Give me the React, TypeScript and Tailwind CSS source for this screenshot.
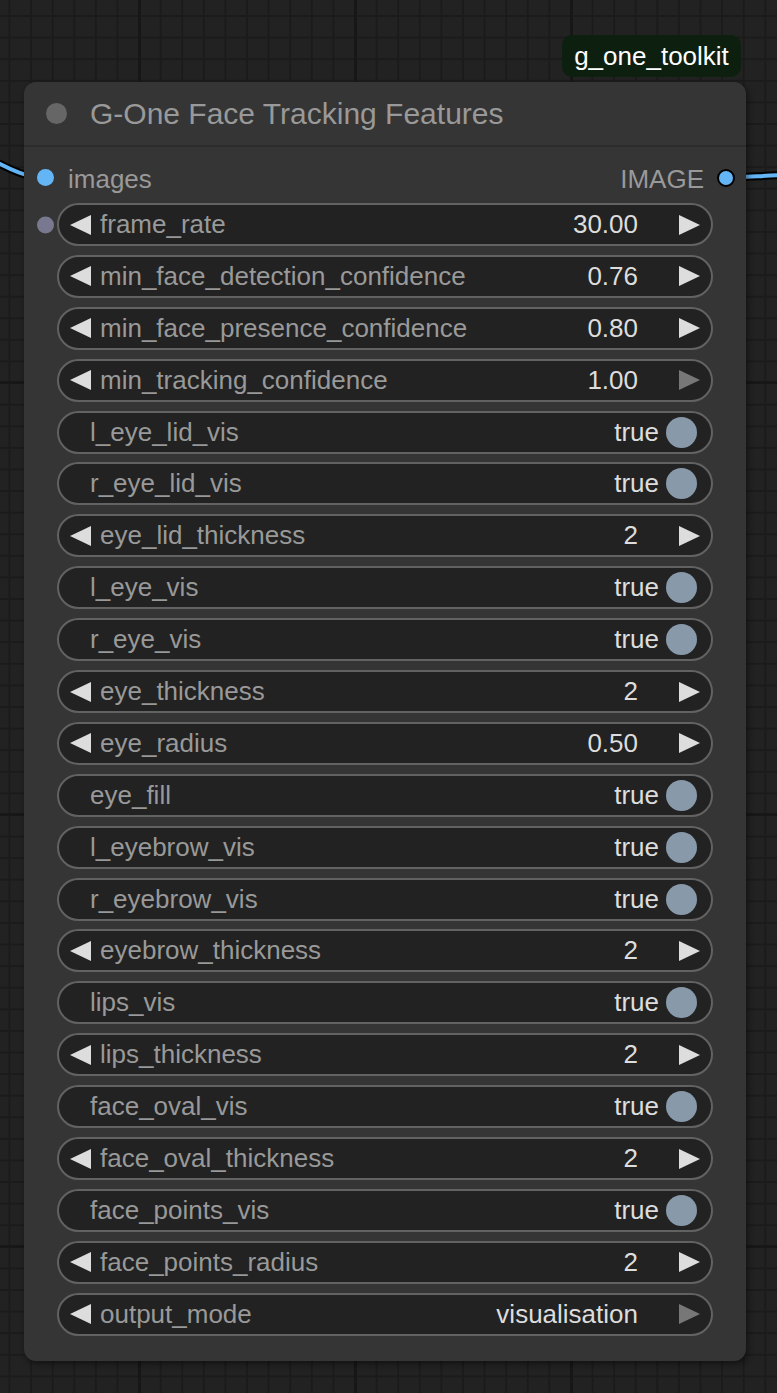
import React from 'react';

type Row =
  | { kind: 'number'; label: string; value: string; atMax?: boolean; input?: boolean }
  | { kind: 'toggle'; label: string };

const rows: Row[] = [
  { kind: 'number', label: 'frame_rate', value: '30.00', input: true },
  { kind: 'number', label: 'min_face_detection_confidence', value: '0.76' },
  { kind: 'number', label: 'min_face_presence_confidence', value: '0.80' },
  { kind: 'number', label: 'min_tracking_confidence', value: '1.00', atMax: true },
  { kind: 'toggle', label: 'l_eye_lid_vis' },
  { kind: 'toggle', label: 'r_eye_lid_vis' },
  { kind: 'number', label: 'eye_lid_thickness', value: '2' },
  { kind: 'toggle', label: 'l_eye_vis' },
  { kind: 'toggle', label: 'r_eye_vis' },
  { kind: 'number', label: 'eye_thickness', value: '2' },
  { kind: 'number', label: 'eye_radius', value: '0.50' },
  { kind: 'toggle', label: 'eye_fill' },
  { kind: 'toggle', label: 'l_eyebrow_vis' },
  { kind: 'toggle', label: 'r_eyebrow_vis' },
  { kind: 'number', label: 'eyebrow_thickness', value: '2' },
  { kind: 'toggle', label: 'lips_vis' },
  { kind: 'number', label: 'lips_thickness', value: '2' },
  { kind: 'toggle', label: 'face_oval_vis' },
  { kind: 'number', label: 'face_oval_thickness', value: '2' },
  { kind: 'toggle', label: 'face_points_vis' },
  { kind: 'number', label: 'face_points_radius', value: '2' },
  { kind: 'number', label: 'output_mode', value: 'visualisation', atMax: true },
];

const Arrow = ({ dir, dim }: { dir: 'left' | 'right'; dim?: boolean }) => (
  <svg width="21" height="20" viewBox="0 0 21 20" className="shrink-0">
    <polygon
      points={dir === 'left' ? '0,10 21,0 21,20' : '21,10 0,0 0,20'}
      fill={dim ? '#777777' : '#dddddd'}
    />
  </svg>
);

const NumberWidget = ({ label, value, atMax, input }: { label: string; value: string; atMax?: boolean; input?: boolean }) => (
  <div className="relative h-[43px] rounded-full border-2 border-[#626262] bg-[#222222] flex items-center">
    {input && (
      <span className="absolute left-[-22px] top-1/2 -translate-y-1/2 w-[17px] h-[17px] rounded-full bg-[#787890]" />
    )}
    <div className="ml-[11px]">
      <Arrow dir="left" />
    </div>
    <span className="ml-[9px] text-[#999999]">{label}</span>
    <span className="ml-auto text-[#dddddd]">{value}</span>
    <div className="ml-[41px] mr-[11px]">
      <Arrow dir="right" dim={atMax} />
    </div>
  </div>
);

const ToggleWidget = ({ label }: { label: string }) => (
  <div className="h-[43px] rounded-full border-2 border-[#626262] bg-[#222222] flex items-center pl-[31px] pr-[14px]">
    <span className="text-[#999999]">{label}</span>
    <span className="ml-auto text-[#dddddd]">true</span>
    <span className="ml-[7px] w-[31px] h-[31px] rounded-full bg-[#8899aa]" />
  </div>
);

export default function App() {
  return (
    <div
      className="relative w-[777px] h-[1393px] overflow-hidden bg-[#222222] font-['Liberation_Sans',Arial,sans-serif] [background-image:linear-gradient(to_right,#171717_3px,transparent_3px),linear-gradient(to_bottom,#171717_3px,transparent_3px),linear-gradient(to_right,#1b1b1b_2px,transparent_2px),linear-gradient(to_bottom,#1b1b1b_2px,transparent_2px)] [background-size:216px_100%,100%_432px,21.6px_100%,100%_21.6px] [background-position:138px_0,0_381px,8.5px_0,0_15px]"
    >
      {/* links */}
      <svg className="absolute inset-0" width="777" height="1393">
        <path d="M -4 162 C 8 168, 18 174, 34 177" stroke="#000" strokeWidth="8" fill="none" />
        <path d="M -4 162 C 8 168, 18 174, 34 177" stroke="#64b5f6" strokeWidth="4" fill="none" />
        <path d="M 720 178 C 745 177, 760 176, 782 175" stroke="#000" strokeWidth="8" fill="none" />
        <path d="M 720 178 C 745 177, 760 176, 782 175" stroke="#64b5f6" strokeWidth="4" fill="none" />
      </svg>

      {/* badge */}
      <div className="absolute left-[562px] top-[35px] w-[179px] h-[42px] rounded-[10px] bg-[#0d1f0f] flex items-center justify-center text-[26px] text-white">
        g_one_toolkit
      </div>

      {/* node */}
      <div className="absolute left-[24px] top-[82px] w-[722px] h-[1279px] rounded-[12px] bg-[#353535] shadow-[2px_3px_6px_rgba(0,0,0,0.45)] flex flex-col text-[26px]">
        <div className="h-[65px] shrink-0 flex items-center pl-[22px] border-b-2 border-[#2c2c2c]">
          <span className="w-[21px] h-[21px] rounded-full bg-[#666666]" />
          <span className="ml-[23px] text-[30px] text-[#999999]">G-One Face Tracking Features</span>
        </div>

        <div className="mt-[10px] h-[43px] shrink-0 flex items-center pl-[13px] pr-[11px]">
          <span className="w-[17px] h-[17px] rounded-full bg-[#64b5f6] -translate-y-[1px]" />
          <span className="ml-[14px] text-[#999999] translate-y-[1px]">images</span>
          <span className="ml-auto text-[#999999] translate-y-[1px]">IMAGE</span>
          <span className="ml-[13px] w-[18px] h-[18px] rounded-full bg-[#64b5f6] border-2 border-black -translate-y-[1px]" />
        </div>

        <div className="mt-[3px] mx-[33px] flex flex-col gap-[8.9px]">
          {rows.map((r) =>
            r.kind === 'number' ? (
              <NumberWidget key={r.label} label={r.label} value={r.value} atMax={r.atMax} input={r.input} />
            ) : (
              <ToggleWidget key={r.label} label={r.label} />
            )
          )}
        </div>
      </div>
    </div>
  );
}
